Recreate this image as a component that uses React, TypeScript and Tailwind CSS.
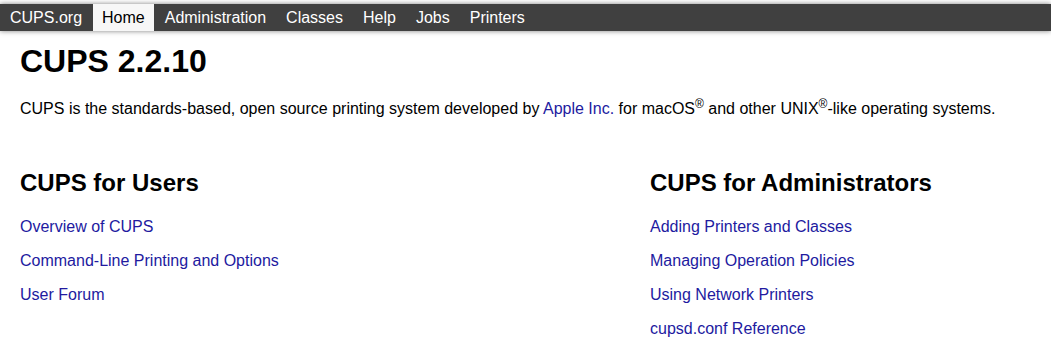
import React from "react";

const userLinks = ["Overview of CUPS", "Command-Line Printing and Options", "User Forum"];
const adminLinks = [
  "Adding Printers and Classes",
  "Managing Operation Policies",
  "Using Network Printers",
  "cupsd.conf Reference",
];
const navItems = ["CUPS.org", "Home", "Administration", "Classes", "Help", "Jobs", "Printers"];

export default function App() {
  return (
    <div className="min-h-[363px] bg-white font-['Liberation_Sans',Arial,sans-serif] text-black">
      <div className="pt-[4px]">
        <nav className="h-[27px] bg-[#404040] shadow-[0_0_5px_rgba(0,0,0,0.5)] flex items-stretch pl-px gap-[2px] text-[16px] leading-[18px]">
          {navItems.map((item) => (
            <a
              key={item}
              href="#"
              className={
                item === "Home"
                  ? "px-[9px] flex items-center bg-[#f7f7f7] text-black"
                  : "px-[9px] flex items-center text-white"
              }
            >
              {item}
            </a>
          ))}
        </nav>
      </div>
      <main className="px-5">
        <h1 className="mt-[12px] text-[32px] font-bold leading-[37px]">CUPS 2.2.10</h1>
        <p className="mt-[20px] text-[16px] leading-[18px]">
          CUPS is the standards-based, open source printing system developed by{" "}
          <a href="#" className="text-[#221a9f]">Apple Inc.</a> for macOS
          <sup className="text-[12px]">®</sup> and other UNIX
          <sup className="text-[12px]">®</sup>-like operating systems.
        </p>
        <div className="mt-[51px] grid grid-cols-[630px_1fr]">
          <section>
            <h2 className="text-[24px] font-bold leading-[28px]">CUPS for Users</h2>
            <ul className="mt-[21px] flex flex-col gap-[16px] text-[16px] leading-[18px]">
              {userLinks.map((l) => (
                <li key={l}>
                  <a href="#" className="text-[#221a9f]">{l}</a>
                </li>
              ))}
            </ul>
          </section>
          <section>
            <h2 className="text-[24px] font-bold leading-[28px]">CUPS for Administrators</h2>
            <ul className="mt-[21px] flex flex-col gap-[16px] text-[16px] leading-[18px]">
              {adminLinks.map((l) => (
                <li key={l}>
                  <a href="#" className="text-[#221a9f]">{l}</a>
                </li>
              ))}
            </ul>
          </section>
        </div>
      </main>
    </div>
  );
}
